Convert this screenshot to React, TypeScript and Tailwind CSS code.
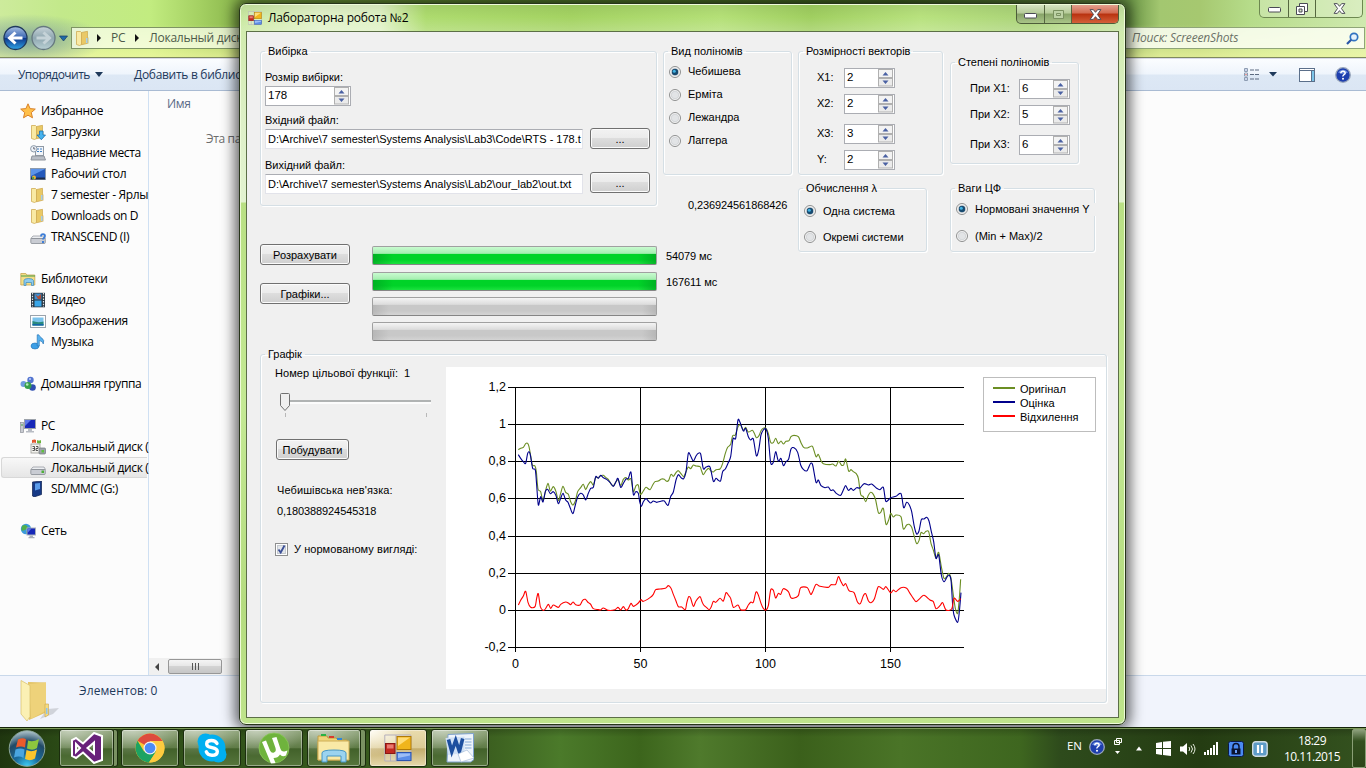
import React from "react";

type Pt = [number, number];

const parse = (s: string, dx = 0): Pt[] =>
  s.trim().split(/\s+/).map((p) => {
    const [x, y] = p.split(",").map(Number);
    return [x + dx, y] as Pt;
  });

const smooth = (pts: Pt[]) => {
  let d = `M${pts[0][0]},${pts[0][1]}`;
  for (let i = 0; i < pts.length - 1; i++) {
    const a = pts[Math.max(0, i - 1)];
    const b = pts[i];
    const c = pts[i + 1];
    const e = pts[Math.min(pts.length - 1, i + 2)];
    const f = (n: number) => n.toFixed(1);
    d += `C${f(b[0] + (c[0] - a[0]) / 7)},${f(b[1] + (c[1] - a[1]) / 7)} ${f(c[0] - (e[0] - b[0]) / 7)},${f(c[1] - (e[1] - b[1]) / 7)} ${c[0]},${c[1]}`;
  }
  return d;
};

const original = smooth([
  ...parse("115,254 122,250 130,247 137,236 143,235 147,245 152,272 157,300 165,303 169,320 174,372 182,380 189,408 196,380 204,355 211,378 220,365 228,380 235,407 242,385 249,364 257,382 265,388 272,410 279,420 286,408 293,380 302,368 310,358 317,374 324,360 332,350 340,360 347,338 355,338 362,332 370,331 378,338 385,343 393,357 400,363 408,350 415,345 422,362 430,343 438,338 445,345 453,342 460,380 468,362 475,361 481,388 490,378 498,367 510,374 518,360 525,350 535,348 545,342 553,343 560,349 566,346 573,328 580,334 588,323 595,317 603,326 611,335 618,320 625,306 632,311 640,300 648,303 660,305 665,318 670,329 678,317 686,310 693,318 700,321 708,314"),
  ...parse("0,312 8,295 16,265 23,247 32,238 38,212 46,210 54,185 62,180 70,196 77,187 85,201 97,196 103,205 109,218 117,212 123,197 130,190 138,190 145,205 152,232 160,233 167,220 175,236 183,228 190,237 198,229 207,227 213,215 222,211 235,215 243,233 251,247 262,249 270,245 278,245 288,275 295,268 303,287 310,296 330,299 338,297 348,303 356,288 364,300 371,300 377,282 386,318 393,314 400,320 408,325 415,340 422,388 430,395 437,410 445,391 452,382 460,388 467,405 475,443 482,442 490,430 498,478 506,465 512,445 520,456 528,450 543,455 550,492 560,480 567,478 575,487 583,515 590,536 597,527 603,503 611,506 618,499 626,500 633,535 640,555 648,580 656,562 664,605 672,640 680,635 686,625 693,640 700,690 706,730 713,745 718,700 722,643", 720),
]);

const estimate = smooth([
  ...parse("115,269 122,280 130,290 137,295 143,265 148,261 152,275 158,310 166,315 170,360 175,420 182,395 189,411 196,380 203,373 211,386 220,380 228,392 235,416 242,400 249,385 257,405 264,412 271,430 279,446 286,420 293,396 302,385 310,390 317,405 325,385 332,370 340,367 347,335 355,340 362,331 370,338 380,343 390,352 400,364 408,350 414,340 422,367 430,355 438,342 445,340 453,322 460,388 467,380 475,385 479,410 484,424 490,410 498,401 505,408 512,414 520,408 530,412 545,408 553,408 560,418 565,420 572,395 580,381 588,345 595,329 603,338 611,341 618,320 625,265 632,273 640,288 648,273 655,265 662,267 670,311 678,306 690,306 700,349 708,340 715,346"),
  ...parse("2,347 8,320 16,312 24,295 32,275 39,222 47,220 54,165 60,172 70,198 77,190 85,215 92,225 100,222 109,272 116,255 123,210 130,195 138,192 145,220 152,293 160,292 167,260 175,288 183,280 190,302 198,290 206,282 213,252 222,248 233,262 242,300 250,313 260,318 265,310 272,295 278,300 288,352 295,345 303,362 315,368 325,366 332,376 340,375 350,386 362,391 370,375 377,362 385,376 393,370 400,376 410,368 420,369 432,356 445,360 455,357 470,370 480,374 490,367 497,408 505,405 512,398 528,394 543,386 551,428 560,412 568,420 575,440 583,485 590,507 597,498 604,464 612,462 620,457 627,468 634,500 641,530 648,580 656,570 664,630 672,650 680,638 687,630 693,645 698,720 702,750 713,772 718,740 723,683", 720),
]);

const deviation = smooth([
  ...parse("115,720 122,706 130,693 137,679 144,712 152,727 165,725 170,700 175,686 181,725 189,736 196,732 205,718 212,730 220,720 235,727 242,718 257,711 265,714 272,719 279,711 287,719 300,720 308,706 316,703 325,713 332,718 340,731 355,734 362,735 370,729 385,736 405,734 414,727 422,735 430,725 438,735 445,731 453,715 460,724 475,714 483,704 490,709 510,698 520,688 527,674 540,672 556,670 565,662 573,670 580,688 588,708 595,725 605,726 616,734 620,715 626,695 632,700 640,724 648,708 660,695 666,710 671,720 680,728 688,734 694,725 700,709 707,712"),
  ...parse("0,700 10,708 18,683 25,690 32,700 40,727 54,720 62,734 77,734 85,720 93,711 100,712 108,681 115,690 123,715 130,730 138,735 145,722 152,675 160,676 167,699 175,685 182,688 190,671 205,680 212,697 220,700 235,692 242,668 262,668 272,688 278,680 288,658 300,664 325,667 333,659 347,658 355,635 362,648 370,662 377,656 387,677 402,683 412,710 421,716 430,692 437,686 445,707 453,713 463,702 475,665 490,673 498,665 512,684 520,675 528,680 543,668 560,670 570,685 580,700 588,710 600,700 612,691 630,705 640,710 648,731 660,722 668,713 678,735 695,732 702,700 713,709 722,701", 720),
]);

function Chart() {
  const ys = ["1,2", "1", "0,8", "0,6", "0,4", "0,2", "0", "-0,2"];
  const xs = ["0", "50", "100", "150"];
  const hy = [20, 57, 94, 131, 169, 206, 243, 280];
  const vx = [69, 194, 319, 444];
  const legend: [string, string][] = [["Оригінал", "#6b8e23"], ["Оцінка", "#00008b"], ["Відхилення", "#ff0000"]];
  return (
    <svg width="660" height="322" viewBox="0 0 660 322" className="block shrink-0 bg-white font-['Liberation_Sans',sans-serif]">
      <g stroke="#000" strokeWidth="1" shapeRendering="crispEdges">
        {hy.map((y) => <line key={y} x1="62" x2="518" y1={y + 0.5} y2={y + 0.5} />)}
        {vx.map((x) => <line key={x} x1={x + 0.5} x2={x + 0.5} y1="20" y2="285" />)}
      </g>
      <g fontSize="12.5" fill="#000">
        {ys.map((t, i) => <text key={t} x="60" y={hy[i] + 4} textAnchor="end">{t}</text>)}
        {xs.map((t, i) => <text key={t} x={vx[i] + 0.5} y="301" textAnchor="middle">{t}</text>)}
      </g>
      <g transform="translate(34 -2) scale(0.33333)" fill="none" strokeWidth="3.3" strokeLinejoin="round">
        <path d={original} stroke="#6b8e23" />
        <path d={estimate} stroke="#00008b" />
        <path d={deviation} stroke="#ff0000" />
      </g>
      <rect x="537.5" y="10.5" width="112" height="54" fill="#fff" stroke="#bdbdbd" />
      {legend.map(([t, c], i) => (
        <g key={t}>
          <rect x="547" y={20 + i * 14} width="22" height="2" fill={c} />
          <text x="574" y={26 + i * 14} fontSize="11">{t}</text>
        </g>
      ))}
    </svg>
  );
}

/* ---------- form controls ---------- */

function Group({ title, className, inner = "", children }: { title: string; className: string; inner?: string; children?: React.ReactNode }) {
  return (
    <fieldset className={`min-w-0 rounded-[3px] border border-[#d5dfe5] shadow-[inset_1px_1px_0_#fff,1px_1px_0_#fff] ${className}`}>
      <legend className="ml-[4px] h-[13px] px-[3px] leading-[13px]">{title}</legend>
      <div className={inner}>{children}</div>
    </fieldset>
  );
}

function Spin({ value, className }: { value: string; className: string }) {
  return (
    <div className={`flex h-[20px] shrink-0 border border-[#abadb3] bg-white ${className}`}>
      <span className="flex-1 pl-[2px] text-[11.500px] leading-[17px]">{value}</span>
      <svg width="15" height="18" viewBox="0 0 15 18" className="mr-px">
        <rect x="0.5" y="0.5" width="14" height="8" fill="#f3f3f3" stroke="#b0b0b0" />
        <rect x="0.5" y="9.5" width="14" height="7.5" fill="#ebebeb" stroke="#b0b0b0" />
        <path d="M4.500 6.500h6l-3-3.500zM4.500 11.500h6l-3 3.500z" fill="#4a61a3" />
      </svg>
    </div>
  );
}

function Radio({ on, label, className = "" }: { on?: boolean; label: string; className?: string }) {
  return (
    <div className={`flex items-center ${className}`}>
      <svg width="12" height="12" viewBox="0 0 12 12" className="mr-[7px] shrink-0">
        <circle cx="6" cy="6" r="5.500" fill="#f8f8f8" stroke="#8e8f8f" />
        <circle cx="6" cy="6" r="3.800" fill="#e2e4e6" stroke="#c9ccce" strokeWidth="0.7" />
        {on && <><circle cx="6" cy="6" r="3.200" fill="#174a70" /><circle cx="5.300" cy="5.200" r="1.500" fill="#43b4e4" /></>}
      </svg>
      <span className="relative whitespace-nowrap bg-[#f0f0f0] pr-[6px]">{label}</span>
    </div>
  );
}

function Btn({ children, className }: { children: React.ReactNode; className: string }) {
  return (
    <button className={`h-[21px] shrink-0 rounded-[3px] border border-[#707070] bg-[linear-gradient(#f2f2f2,#ebebeb_48%,#dddddd_50%,#cfcfcf)] pt-px text-center leading-[18px] whitespace-nowrap shadow-[inset_0_0_0_1px_#fbfbfb] ${className}`}>
      {children}
    </button>
  );
}

function Bar({ full, className = "" }: { full?: boolean; className?: string }) {
  return (
    <div className={`h-[19px] w-[285px] overflow-hidden rounded-[2px] border border-[#a0a0a0] border-b-[#858585] ${full ? "bg-[linear-gradient(#c9fbd0,#a5eeb0_38%,#00d328_40%,#00d328_75%,#1be23f)]" : "bg-[linear-gradient(#f4f4f4,#dcdcdc_38%,#c8c8c8_40%,#c8c8c8_75%,#d4d4d4)]"} ${className}`}>
      <div className={`mt-[7px] h-[10px] ${full ? "bg-[linear-gradient(90deg,#00a020aa,transparent_20px,transparent_265px,#00a020aa)]" : "bg-[linear-gradient(90deg,#a8a8a888,transparent_16px,transparent_269px,#a8a8a888)]"}`} />
    </div>
  );
}

function FormIcon({ size }: { size: number }) {
  return (
    <svg width={size} height={size} viewBox="0 0 28 28">
      <path d="M.8 1h26v26H.8zM.8 19h12M12 1v26M6.500 19v8" fill="#ffffff38" stroke="#b4afbb" />
      <rect x="1.500" y="9.500" width="9.500" height="10" fill="#c22a20" stroke="#8a1713" />
      <rect x="3" y="10.500" width="6.500" height="4" fill="#e87a70" />
      <rect x="13" y="2.500" width="14" height="13" fill="#f0b51c" stroke="#b07a06" />
      <path d="M14 3.500h12L14 12z" fill="#ffdc77" />
      <rect x="13" y="18.500" width="14" height="8" fill="#5b8de8" stroke="#2c54ae" />
      <path d="M14 19.500h12v2L14 24z" fill="#9dbdf5" />
    </svg>
  );
}

const caption = "flex items-center justify-center border-r border-[#55673f]";

function CloseGlyph() {
  return (
    <svg width="13" height="11" viewBox="0 0 12 10">
      <path d="M1 .5h3l2 2.500 2-2.500h3L7.800 5 11 9.500H8L6 7 4 9.500H1L4.200 5z" fill="#fff" stroke="#4a4a55" strokeWidth="0.9" />
    </svg>
  );
}
function MinGlyph() {
  return <svg width="13" height="6" viewBox="0 0 13 6" className="mt-[3px]"><rect x=".5" y=".5" width="12" height="4.500" rx="1" fill="#fff" stroke="#4a4a55" /></svg>;
}

function FormWindow() {
  return (
    <section className="absolute left-[239px] top-[3px] flex h-[722px] w-[887px] flex-col rounded-[7px] border border-[#27351a] bg-[linear-gradient(#cdeaa6,#def0c8_120px,#e3f3d1_198px,#b9e084_199px,#c4e994_400px,#b5dc80_600px,#bfe48c)] px-[7px] shadow-[inset_0_0_0_1px_#eefbd9,0_0_14px_4px_#000000a0]">
      <header className="-mx-[6px] mt-px flex h-[26px] shrink-0 rounded-t-[5px] bg-[linear-gradient(#00000010,transparent_12px,#ffffff30),linear-gradient(90deg,#c9e8a0,#e2f3c9_80px,#dff2c4_140px,#addb6e_185px,#a4d362_330px,#b4e077_480px,#a0cf60_570px,#b8e27e_680px,#aad378_790px,#c6e4a2)]">
        <div className="ml-[7px] mt-[6px]"><FormIcon size={14} /></div>
        <h1 className="ml-[6px] mt-[4px] font-['Open_Sans',sans-serif] text-[12px] leading-[18px] tracking-[-0.2px]">Лабораторна робота №2</h1>
        <div className="ml-auto mr-[5px] flex h-[19px] w-[103px] overflow-hidden rounded-b-[5px] border border-t-0 border-[#4d5d3a] bg-[linear-gradient(#d5e3c2,#b5cb98_45%,#87a368_50%,#a9c487)]">
          <div className={`w-[28px] ${caption}`}><MinGlyph /></div>
          <div className={`w-[27px] ${caption}`}><svg width="11" height="9" viewBox="0 0 11 9"><path d="M.5 .5h10v8H.5zM3.500 3.500h4v2h-4z" fill="#bdd2a5" stroke="#7a9160" /></svg></div>
          <div className="flex flex-1 items-center justify-center bg-[linear-gradient(#e3a08e,#d26a50_45%,#b8310f_50%,#d4603a)]"><CloseGlyph /></div>
        </div>
      </header>
      <main className="mb-[6px] -mx-px flex-1 border border-[#5c6f47] bg-[#f0f0f0] pl-[13px] pt-[13px] font-['Liberation_Sans',sans-serif] text-[11px] leading-[13px] text-black">
        <div className="flex h-[296px] items-start">
          <div className="w-[397px]">
            <Group title="Вибірка" className="h-[161px]" inner="pl-[4px]">
              <div className="mt-[13px]">Розмір вибірки:</div>
              <Spin value="178" className="mt-[2px] w-[86px]" />
              <div className="mt-[8px]">Вхідний файл:</div>
              <div className="mt-px flex">
                <div className="mt-px h-[20px] w-[318px] overflow-hidden border border-[#e2e3ea] border-t-[#abadb3] bg-white pl-[2px] leading-[18px] whitespace-nowrap">D:\Archive\7 semester\Systems Analysis\Lab3\Code\RTS - 178.t</div>
                <Btn className="ml-[7px] w-[60px]">...</Btn>
              </div>
              <div className="mt-[10px]">Вихідний файл:</div>
              <div className="flex">
                <div className="mt-[2px] h-[20px] w-[318px] overflow-hidden border border-[#e2e3ea] border-t-[#abadb3] bg-white pl-[2px] leading-[18px] whitespace-nowrap">D:\Archive\7 semester\Systems Analysis\Lab2\our_lab2\out.txt</div>
                <Btn className="ml-[7px] w-[60px]">...</Btn>
              </div>
            </Group>
            <div className="mt-[38px] flex">
              <div className="flex w-[90px] flex-col gap-[18px]">
                <Btn className="w-[90px]">Розрахувати</Btn>
                <Btn className="w-[90px]">Графіки...</Btn>
              </div>
              <div className="ml-[22px] pt-[2px]">
                <Bar full />
                <Bar full className="mt-[7px]" />
                <Bar className="mt-[6px]" />
                <Bar className="mt-[6px]" />
              </div>
            </div>
          </div>
          <div className="ml-[6px] w-[129px]">
            <Group title="Вид поліномів" className="h-[130px]" inner="pl-[5px] pt-[2px]">
              <Radio on label="Чебишева" className="h-[23px]" />
              <Radio label="Ерміта" className="h-[23px]" />
              <Radio label="Лежандра" className="h-[23px]" />
              <Radio label="Лаггера" className="h-[23px]" />
            </Group>
            <div className="ml-[25px] mt-[24px] tracking-[-0.1px]">0,236924561868426</div>
            <div className="ml-[3px] mt-[38px] tracking-[-0.1px]">54079 мс</div>
            <div className="ml-[3px] mt-[13px] tracking-[-0.1px]">167611 мс</div>
          </div>
          <div className="ml-[6px] w-[145px]">
            <Group title="Розмірності векторів" className="h-[130px]" inner="pl-[18px]">
              <div className="mt-[10px] flex"><span className="w-[27px] leading-[19px]">X1:</span><Spin value="2" className="w-[51px]" /></div>
              <div className="mt-[6px] flex"><span className="w-[27px] leading-[19px]">X2:</span><Spin value="2" className="w-[51px]" /></div>
              <div className="mt-[10px] flex"><span className="w-[27px] leading-[19px]">X3:</span><Spin value="3" className="w-[51px]" /></div>
              <div className="mt-[6px] flex"><span className="w-[27px] leading-[19px]">Y:</span><Spin value="2" className="w-[51px]" /></div>
            </Group>
            <Group title="Обчислення λ" className="mt-[7px] h-[70px] w-[129px]" inner="pl-[5px] pt-[3px]">
              <Radio on label="Одна система" className="h-[26px]" />
              <Radio label="Окремі системи" className="h-[26px]" />
            </Group>
          </div>
          <div className="ml-[7px] pt-[11px]">
            <Group title="Степені поліномів" className="h-[108px] w-[129px]" inner="pl-[19px]">
              <div className="mt-[10px] flex"><span className="w-[49px] leading-[19px]">При X1:</span><Spin value="6" className="w-[51px]" /></div>
              <div className="mt-[6px] flex"><span className="w-[49px] leading-[19px]">При X2:</span><Spin value="5" className="w-[51px]" /></div>
              <div className="mt-[10px] flex"><span className="w-[49px] leading-[19px]">При X3:</span><Spin value="6" className="w-[51px]" /></div>
            </Group>
            <Group title="Ваги ЦФ" className="mt-[18px] h-[70px] w-[145px]" inner="pl-[5px]">
              <Radio on label="Нормовані значення Y" className="h-[28px]" />
              <Radio label="(Min + Max)/2" className="h-[26px]" />
            </Group>
          </div>
        </div>
        <Group title="Графік" className="mt-[7px] h-[355px] w-[847px]">
          <div className="flex">
            <div className="w-[185px] shrink-0 pl-[14px] pt-[6px]">
              <div className="flex"><span className="w-[129px] tracking-[0.050px]">Номер цільової функції:</span><span>1</span></div>
              <svg width="160" height="28" viewBox="0 0 160 28" className="mt-[12px] block">
                <rect x="14" y="8" width="142" height="2" fill="#b0b3b3" />
                <rect x="14" y="10" width="142" height="2" fill="#fcfcfc" />
                <path d="M5.500 2.500q0-1 1-1h7q1 0 1 1v11l-4.500 5-4.500-5z" fill="#efefef" stroke="#707070" />
                <path d="M10.500 21v4M151.500 21v4" stroke="#b8b8b8" />
              </svg>
              <Btn className="ml-px mt-[19px] w-[73px]">Побудувати</Btn>
              <div className="ml-[2px] mt-[24px] tracking-[0.100px]">Чебишівська нев'язка:</div>
              <div className="ml-[2px] mt-[8px] tracking-[-0.1px]">0,180388924545318</div>
              <div className="mt-[25px] flex items-center">
                <svg width="13" height="13" viewBox="0 0 13 13"><rect x=".5" y=".5" width="12" height="12" fill="#fff" stroke="#8e8f8f" /><rect x="2.500" y="2.500" width="8" height="8" fill="#e3e6ea" stroke="#c5cad0" /><path d="M3.500 6.500l2.200 3L9.500 2.500" fill="none" stroke="#3b4f96" strokeWidth="1.800" /></svg>
                <span className="ml-[6px] tracking-[0.050px]">У нормованому вигляді:</span>
              </div>
            </div>
            <div className="relative mt-[6px]"><Chart /></div>
          </div>
        </Group>
      </main>
    </section>
  );
}

/* ---------- explorer ---------- */

function Ico({ kind }: { kind: string }) {
  const folder = <><path d="M1.500 1.500h4l1 1v12l-2 1-3-1z" fill="#f9eaa4" stroke="#cfac55" strokeWidth="0.8" /><path d="M6.500 2.500l6-1.200v12l-6 1.500z" fill="#e9c966" stroke="#cfac55" strokeWidth="0.8" /><rect x="11" y="8" width="2" height="5" fill="#a8cfea" /><path d="M13 7.500v6" stroke="#cfac55" strokeWidth="0.8" /></>;
  return (
    <svg width="16" height="16" viewBox="0 0 16 16" className="shrink-0">
      {kind === "star" && <path d="M8 .8l2.100 4.800 5.200.5-4 3.500 1.200 5.200L8 12.200l-4.500 2.600 1.200-5.200-4-3.500 5.200-.5z" fill="#ffc04a" stroke="#d9822b" />}
      {kind === "folder" && folder}
      {kind === "down" && <>{folder}<path d="M9.500 7h3.500v4h2.500l-4.200 4.700L7 11h2.500z" fill="#46b3ee" stroke="#1b6fae" strokeWidth="0.8" /></>}
      {kind === "recent" && <><rect x="5.500" y="1.500" width="8" height="9" fill="#f2f5f9" stroke="#8f99a5" /><path d="M7 4h2M10 4h2M7 6.500h2M10 6.500h2" stroke="#3e7fc4" /><path d="M2 11h12l1.500 4H1z" fill="#b9bec6" stroke="#8d939b" /><circle cx="3.800" cy="3.800" r="3.200" fill="#eef3f8" stroke="#8c99a8" /><path d="M3.800 2v2h1.500" stroke="#445" fill="none" strokeWidth="0.8" /></>}
      {kind === "desktop" && <><rect x=".5" y="2.500" width="15" height="11" fill="#2358bb" stroke="#8c9aac" /><path d="M1 3h14L1 10z" fill="#5c93e8" /><path d="M1 12.500h14" stroke="#1a2b4a" strokeWidth="2" /><circle cx="4" cy="11.500" r="2" fill="#f0b030" /><circle cx="3.200" cy="12" r="1" fill="#36a443" /></>}
      {(kind === "usb" || kind === "drive") && <><path d="M3 7h11l1.500 2.500H.8z" fill="#eceef1" stroke="#999da4" strokeWidth="0.8" /><rect x=".8" y="9.500" width="14.500" height="5" rx="1" fill="#c9ccd3" stroke="#878b93" strokeWidth="0.8" />{kind === "drive" && <rect x="11.500" y="10.500" width="2.500" height="2.500" fill="#4fae3a" />}{kind === "usb" && <><path d="M11 7.500q0-2.300 2-2.300t2 1.800q0 1-1 1.800t-1 1.700" fill="none" stroke="#3f7fd8" strokeWidth="1.800" /><rect x="12" y="12" width="2" height="2" fill="#3f7fd8" /></>}</>}
      {kind === "lib" && <><path d="M.8 2.500h5l1 1.500h8v10H.8z" fill="#f3dd86" stroke="#c6a550" strokeWidth="0.8" /><path d="M1 5h14" stroke="#4aa04a" /><path d="M4 14.500V9.500q0-2 4.500-2t5 2v5h-2v-3H6v3z" fill="#8ccbf0" stroke="#3b8abf" strokeWidth="0.7" /></>}
      {kind === "video" && <><rect x="1" y=".8" width="14" height="14.500" fill="#2b3742" /><path d="M2.500 1v14M13.500 1v14" stroke="#dfe7ee" strokeWidth="1.200" strokeDasharray="1.500 1.200" /><rect x="4.500" y="1.500" width="7" height="6" fill="#3e8fd0" /><rect x="4.500" y="8.500" width="7" height="6" fill="#3aa6e8" /><path d="M5 2l3 2.500L11 2v5H8z" fill="#b0503a" /></>}
      {kind === "image" && <><rect x=".5" y="2.500" width="15" height="12" fill="#fff" stroke="#9aa3ac" /><rect x="2.500" y="4.500" width="11" height="8" fill="#7cc3ec" /><path d="M2.500 8q5 2 11 .5v4h-11z" fill="#2a8a7c" /><path d="M2.500 11h11v1.500h-11z" fill="#1565a8" /></>}
      {kind === "music" && <><ellipse cx="5" cy="12" rx="4" ry="3" fill="#3d9fe6" stroke="#1c6bb0" strokeWidth="0.6" /><path d="M7.200 12V.8h1.600q1 2.200 3 3.200 3 2 1.500 6-.5-2.800-4-3.500V12z" fill="#58b1ee" stroke="#1c6bb0" strokeWidth="0.6" /></>}
      {kind === "home" && <><circle cx="10.500" cy="4" r="3.200" fill="#5274d0" /><circle cx="3.500" cy="8" r="3" fill="#6f9be0" /><circle cx="12.500" cy="11.500" r="3.300" fill="#2f4fb0" /><circle cx="8" cy="9.500" r="3.500" fill="#37a04a" /><circle cx="7.200" cy="8.500" r="1.300" fill="#b9eac0" /><circle cx="10" cy="3" r="1" fill="#c3d2f8" /></>}
      {kind === "pc" && <><rect x="4.500" y="1.500" width="11" height="9" fill="#1728b8" stroke="#9ca2ab" /><path d="M5 2h6L5 8z" fill="#5d78ea" /><path d="M8 11h4v2h2v1.500H6V13h2z" fill="#b8bcc4" /><rect x=".5" y="4.500" width="3" height="10" fill="#c9ccd2" stroke="#8d929a" strokeWidth="0.7" /><path d="M1 7h2" stroke="#47a447" /></>}
      {kind === "win" && <><path d="M2 1q3-1 4 0v3Q4 3 2 4z" fill="#e2572e" /><path d="M7 1q2 1 4 0v3Q9 5 7 4z" fill="#69b33c" /><rect x="1" y="5" width="9" height="9" fill="#f3f3ee" stroke="#9a9a94" strokeWidth="0.8" /><path d="M2.500 7.500h2v4h-2M2.500 9.500h2M6 7.500h2v2H6v2h2" stroke="#333" fill="none" strokeWidth="0.8" /><rect x="9" y="9" width="6.500" height="6" rx="1" fill="#9da3aa" stroke="#70757c" strokeWidth="0.7" /><rect x="11.500" y="11" width="2.500" height="2.500" fill="#5fc03f" /></>}
      {kind === "sd" && <><path d="M2.500 1l9-1v13.500L4 16l-1.500-1z" fill="#173a86" stroke="#0d2050" strokeWidth="0.7" /><path d="M5 2.500l5-.6v6l-5 1.600z" fill="#5a9bea" /></>}
      {kind === "net" && <><circle cx="6" cy="6" r="5.200" fill="#3b9bdc" /><path d="M2 3q3-2 5 0T5 7 1.500 6zM6 8l3 1-2 2.200z" fill="#51b04c" /><rect x="7" y="5" width="8.500" height="7" fill="#1728b8" stroke="#a9b0ba" /><path d="M7.500 5.500h4L7.500 10z" fill="#5d78ea" /><path d="M9.500 12.500h3.500v1.500h1.500v1.200h-6V14h1z" fill="#a9afb9" /></>}
    </svg>
  );
}

const nav: ([string, string, number] | null)[] = [
  ["star", "Избранное", 0], ["down", "Загрузки", 1], ["recent", "Недавние места", 1], ["desktop", "Рабочий стол", 1],
  ["folder", "7 semester - Ярлы", 1], ["folder", "Downloads on D", 1], ["usb", "TRANSCEND (I)", 1], null,
  ["lib", "Библиотеки", 0], ["video", "Видео", 1], ["image", "Изображения", 1], ["music", "Музыка", 1], null,
  ["home", "Домашняя группа", 0], null,
  ["pc", "PC", 0], ["win", "Локальный диск (", 1], ["drive", "Локальный диск (", 2], ["sd", "SD/MMC (G:)", 1], null,
  ["net", "Сеть", 0],
];

function Help() {
  return (
    <svg width="16" height="16" viewBox="0 0 16 16">
      <circle cx="8" cy="8" r="7.300" fill="#1e3fae" stroke="#9aa7bb" strokeWidth="1.300" />
      <path d="M3 5.500a5.500 4.500 0 0 1 10 0q-5 2.500-10 0z" fill="#6c8de0" />
      <path d="M5.800 6.200q.2-2 2.200-2t2.200 1.800q0 1-1.200 1.700T8 9.500" fill="none" stroke="#fff" strokeWidth="1.500" />
      <circle cx="8" cy="11.700" r="1" fill="#fff" />
    </svg>
  );
}

function Explorer() {
  return (
    <div className="flex h-[728px] flex-col overflow-hidden bg-[#fcfcfc] font-['Open_Sans',sans-serif] text-[12px] tracking-[-0.35px]">
      <div className="flex h-[58px] shrink-0 flex-col border-b border-[#7f8a5e] bg-[radial-gradient(80px_26px_at_26px_40px,#7fa39a,transparent),linear-gradient(transparent_24px,#f6faa4b0_56px),linear-gradient(90deg,#cdeb9c,#c3e98b_60px,#c2ec80_150px,#a4d062_200px,#7aa73f_260px,#5c8630_500px,#466b24_900px,#6d9848_1130px,#a3c770_1160px,#a6c870_1200px,#b6dc8a_1250px,#cfe9af)]">
        <div className="flex h-[27px] justify-end">
          <div className="mr-[3px] flex h-[18px] w-[104px] overflow-hidden rounded-b-[5px] border border-t-0 border-[#6d8850] bg-[#ffffff38]">
            <div className={`w-[29px] ${caption}`}><MinGlyph /></div>
            <div className={`w-[27px] ${caption}`}><svg width="12" height="12" viewBox="0 0 12 12"><path d="M3.500 .5h8v8h-8z" fill="#fff" stroke="#4a4a55" /><path d="M.5 3.500h8v8h-8z" fill="#fff" stroke="#4a4a55" /><path d="M3 6h3v3H3z" fill="#d5e5c5" stroke="#4a4a55" /></svg></div>
            <div className="flex flex-1 items-center justify-center"><CloseGlyph /></div>
          </div>
        </div>
        <div className="flex h-[23px]">
          <svg width="71" height="30" viewBox="0 0 71 30" className="-mt-[4px] shrink-0">
            <defs>
              <linearGradient id="bk" x2="0" y2="1"><stop offset="0" stopColor="#a9c0e2" /><stop offset=".48" stopColor="#3c68b4" /><stop offset=".52" stopColor="#0f3a8e" /><stop offset="1" stopColor="#2fa4e6" /></linearGradient>
              <linearGradient id="fw" x2="0" y2="1"><stop offset="0" stopColor="#c8d4da" /><stop offset=".5" stopColor="#8fa7b0" /><stop offset="1" stopColor="#b9d0d4" /></linearGradient>
            </defs>
            <circle cx="15.500" cy="15" r="11.500" fill="url(#bk)" stroke="#20395c" strokeWidth="1.300" />
            <path d="M22.500 15H10M15.500 9.500L9.500 15l6 5.500" fill="none" stroke="#fff" strokeWidth="3" />
            <circle cx="43.500" cy="15" r="11.500" fill="url(#fw)" stroke="#66787f" strokeWidth="1.300" />
            <path d="M36.500 15H49M43.500 9.500l6 5.500-6 5.500" fill="none" stroke="#c5d3d8" strokeWidth="3" />
            <path d="M59.500 13h8l-4 5z" fill="#1f6aa8" stroke="#153a66" strokeWidth="0.7" />
          </svg>
          <div className="flex h-[22px] w-[300px] items-center border border-[#7e9463] bg-[#fbfff0b8] pl-[3px] tracking-[-0.250px] text-[#4d5a4a]">
            <Ico kind="folder" />
            <svg width="6" height="8" viewBox="0 0 6 8" className="ml-[5px]"><path d="M1 0l4 4-4 4z" fill="#111" /></svg>
            <span className="ml-[9px]">PC</span>
            <svg width="6" height="8" viewBox="0 0 6 8" className="ml-[9px]"><path d="M1 0l4 4-4 4z" fill="#111" /></svg>
            <span className="ml-[9px]">Локальный диск</span>
          </div>
          <div className="ml-auto mr-px flex h-[22px] w-[260px] items-center border border-[#8fa578] bg-[#fdfff5d8] pl-[26px] tracking-[-0.150px] text-[#6b7167] italic">
            <span>Поиск: ScreeenShots</span>
            <svg width="13" height="13" viewBox="0 0 13 13" className="ml-auto mr-[5px]"><circle cx="8" cy="5" r="3.700" fill="#e6f2fb" stroke="#3273c0" strokeWidth="1.700" /><path d="M5.200 7.800L1 12" stroke="#2a56a8" strokeWidth="2.200" /></svg>
          </div>
        </div>
      </div>
      <div className="flex h-[33px] shrink-0 items-center border-b border-[#a9bbd3] border-t border-t-[#d9d9ea] bg-[linear-gradient(#fbfdff,#eff5fc_47%,#dde8f5_53%,#dbe6f4)] pl-[18px] text-[#1e395b]">
        <span className="w-[72px] tracking-[-0.550px]">Упорядочить</span>
        <svg width="8" height="5" viewBox="0 0 8 5" className="ml-[5px]"><path d="M0 0h8L4 5z" fill="#1e395b" /></svg>
        <span className="ml-[31px] whitespace-nowrap tracking-[-0.300px]">Добавить в библио</span>
        <svg width="16" height="14" viewBox="0 0 16 14" className="ml-auto"><path d="M.5 .5h3v3h-3zM.5 5h3v3h-3zM.5 9.500h3v3h-3z" fill="#fff" stroke="#8d9cb2" /><path d="M1.500 6.500h1" stroke="#c33" /><path d="M1.500 2h1M1.500 11h1" stroke="#35a" /><path d="M6 2h4M11 2h4M6 6.500h4M11 6.500h4M6 11h4M11 11h4" stroke="#5d6b80" /></svg>
        <svg width="8" height="5" viewBox="0 0 8 5" className="ml-[9px]"><path d="M0 0h8L4 4.500z" fill="#1e395b" /></svg>
        <svg width="16" height="14" viewBox="0 0 16 14" className="ml-[22px]"><rect x=".5" y=".5" width="15" height="13" fill="#fff" stroke="#5b6f8a" /><path d="M0 2.500h16M12.500 3v11" stroke="#5b6f8a" /><rect x="13" y="3" width="2" height="10" fill="#7cc4e8" /></svg>
        <div className="ml-[20px] mr-[15px]"><Help /></div>
      </div>
      <div className="flex min-h-0 flex-1">
        <nav className="w-[149px] shrink-0 border-r border-[#cfe0f3] pt-[9px]">
          {nav.map((n, i) =>
            n ? (
              <div key={i} className={`flex h-[21px] items-center whitespace-nowrap ${n[2] === 0 ? "pl-[20px]" : n[2] === 1 ? "pl-[30px]" : "ml-px mr-px rounded-l-[3px] border border-r-0 border-[#d8d8d8] bg-[linear-gradient(#f8f8f8,#e6e6e6)] pl-[28px]"}`}>
                <Ico kind={n[0]} />
                <span className="ml-[5px]">{n[1]}</span>
              </div>
            ) : <div key={i} className="h-[21px]" />
          )}
        </nav>
        <div className="flex flex-1 flex-col text-[#6d6d6d]">
          <div className="mt-[4px] pl-[18px] text-[#5a6a86]">Имя</div>
          <div className="mt-[17px] pl-[57px]">Эта папк</div>
          <div className="mt-auto flex h-[17px] w-[700px] items-center bg-[#f0f0f0] pl-[5px]">
            <svg width="6" height="8" viewBox="0 0 6 8"><path d="M5 0v8L1 4z" fill="#444" /></svg>
            <div className="ml-[8px] flex h-[15px] w-[54px] items-center justify-center gap-[2px] rounded-[2px] border border-[#979797] bg-[linear-gradient(#f5f5f5,#e6e6e6_48%,#d3d3d3_50%,#c6c6c6)]">
              <i className="h-[7px] w-px bg-[#555]" /><i className="h-[7px] w-px bg-[#555]" /><i className="h-[7px] w-px bg-[#555]" />
            </div>
          </div>
        </div>
      </div>
      <footer className="flex h-[53px] shrink-0 border-t border-[#c9d8ea] bg-[#f1f4fc] text-[#1e395b]">
        <svg width="42" height="46" viewBox="0 0 42 46" className="ml-[19px] mt-[3px]">
          <path d="M28 30l12-1-6 6-13 5z" fill="#00000022" />
          <path d="M9 3l18 .5v30L10 41z" fill="#e3c468" />
          <path d="M10 5l17-1.500v28L12 40z" fill="#eed27a" />
          <path d="M2 1.500l9 5v31l-3 4.500-6-7z" fill="#fbf0b4" stroke="#d9bf68" strokeWidth="0.7" />
          <path d="M26 25h3.500v11l-3.500 2z" fill="#f4dc82" stroke="#c9a44a" strokeWidth="0.6" /><rect x="27" y="29" width="1.500" height="6" fill="#8dc3ec" />
        </svg>
        <span className="ml-[18px] mt-[6px] tracking-[0.100px]">Элементов: 0</span>
      </footer>
    </div>
  );
}

/* ---------- taskbar ---------- */

const tb = "flex h-[38px] items-center justify-center rounded-[3px] border border-[#1b2d0e] shadow-[inset_0_0_0_1px_#ffffff66]";
const tbGlass = "bg-[radial-gradient(50px_26px_at_10px_0,#ffffff80,transparent),linear-gradient(#8da278,#5f7b46_50%,#42612a_52%,#56763c)]";

function Taskbar() {
  return (
    <footer className="flex h-[40px] items-start overflow-hidden border-t border-[#7d9a5a] bg-[linear-gradient(#00000030,transparent_8px,transparent),linear-gradient(90deg,#1f360f,#2b4a16_60px,#3c6020_490px,#4b7a2a_560px,#3c651c_640px,#4f7a2c_700px,#3b601b_800px,#4a7427_900px,#3e661f_1020px,#2e4b1c_1060px,#243c12_1200px,#34521f_1366px)] font-['Open_Sans',sans-serif] text-[12px] text-white shadow-[0_-1px_0_#142408]">
      <svg width="59" height="39" viewBox="0 0 59 39" className="shrink-0">
        <defs><radialGradient id="orb" cx=".5" cy="1" r="1"><stop offset="0" stopColor="#3fd0f8" /><stop offset=".35" stopColor="#1a6b9c" /><stop offset=".7" stopColor="#214a66" /><stop offset="1" stopColor="#b3c8cf" /></radialGradient></defs>
        <circle cx="27" cy="19.500" r="17.800" fill="url(#orb)" stroke="#8ba69a" />
        <path d="M18 10.500q5-2.500 8 0l-1 8q-4-2-9 0z" fill="#ea5b2c" />
        <path d="M28 11.500q5 2 11-1.500l-2 9q-4 3-10 .5z" fill="#8cc63e" />
        <path d="M15.500 20.500q5-2 9 0l-1 8.500q-4-2.500-9.500-.5z" fill="#4aa5e0" />
        <path d="M26.500 21q5 2.500 10.500-.5l-2 9q-5 3-10 .5z" fill="#fbc52c" />
      </svg>
      <div className={`w-[55px] ${tb} ${tbGlass}`}>
        <svg width="32" height="32" viewBox="0 0 32 32"><path d="M23 1l8 3v24l-8 3L12 20.500 5 26l-4-2V8l4-2 7 5.500zM23 10.500L16.500 16l6.500 5.500zM5 12v8l4-4z" fill="#68217a" stroke="#fff" strokeWidth="2" fillRule="evenodd" /></svg>
      </div>
      <div className="mr-[3px] h-[38px] w-[4px] rounded-r-[3px] border border-l-0 border-[#1b2d0e] bg-[#7a9262]" />
      <div className={`mr-[4px] w-[58px] ${tb} ${tbGlass}`}>
        <svg width="30" height="30" viewBox="0 0 30 30"><circle cx="15" cy="15" r="14.500" fill="#fcc934" /><path d="M15 15L2.500 7.700A14.500 14.500 0 0 1 27.600 8H15z" fill="#dd4b3e" /><path d="M2.500 7.700A14.500 14.500 0 0 0 14 29.500L21 18.500 9 18.500z" fill="#1da362" /><path d="M14 29.500L21.500 18 15 8h12.600A14.500 14.500 0 0 1 14 29.500z" fill="#fdcb3f" /><circle cx="15" cy="15" r="6.500" fill="#f1f1f1" /><circle cx="15" cy="15" r="5.300" fill="#4c8bf5" /></svg>
      </div>
      <div className={`mr-[4px] w-[58px] ${tb} ${tbGlass}`}>
        <svg width="30" height="30" viewBox="0 0 30 30"><circle cx="15" cy="15" r="13.500" fill="#00aff0" /><circle cx="8.500" cy="8.500" r="8" fill="#00aff0" /><circle cx="21.500" cy="21.500" r="8" fill="#00aff0" /><path d="M20 10.500Q18.500 7.500 14.500 7.500q-4.800 0-4.800 3.400 0 2.700 5.300 3.700t5.300 3.900q0 3.800-5.300 3.800-4.500 0-5.700-3.500" fill="none" stroke="#fff" strokeWidth="3.400" strokeLinecap="round" /></svg>
      </div>
      <div className={`mr-[4px] w-[58px] ${tb} ${tbGlass}`}>
        <svg width="32" height="32" viewBox="0 0 32 32"><circle cx="16" cy="16" r="15" fill="#6fb33d" stroke="#8bc95a" strokeWidth="0.8" /><path d="M4 10l4-1.500 4 10q1.500 3 4 2t1.500-4.500l-3.500-10 4.500-1 4 12q1 3 4 2.500l3-1-1.500 5q-4 2-6-1-2 3.500-6.500 3.500l2 5-4.500.5z" fill="#fff" /></svg>
      </div>
      <div className={`w-[54px] ${tb} ${tbGlass}`}>
        <svg width="34" height="32" viewBox="0 0 34 32"><path d="M1 4h9l1 2h8l2 2h9v20H1z" fill="#eed47a" stroke="#bf9c42" /><path d="M1 9h31v19H1z" fill="#f9e9a6" stroke="#cfae56" /><path d="M4 3h5" stroke="#28b345" strokeWidth="2" /><path d="M12 5h5" stroke="#d93b2c" strokeWidth="2" /><path d="M20 7h5" stroke="#2f86d8" strokeWidth="2" /><path d="M5 30V21q0-3 12-3t12 3v9h-5v-6H10v6z" fill="#9bd3ef" stroke="#4796c4" /></svg>
      </div>
      <div className="mr-[3px] h-[38px] w-[5px] rounded-r-[3px] border border-l-0 border-[#1b2d0e] bg-[#7a9262]" />
      <div className={`mr-[4px] w-[58px] bg-[radial-gradient(40px_26px_at_0_0,#fffdf5,transparent),linear-gradient(#e9dcae,#dccb95_50%,#c3ac6a_52%,#e6d9ac)] ${tb}`}><FormIcon size={28} /></div>
      <div className={`w-[58px] ${tb} ${tbGlass}`}>
        <svg width="30" height="30" viewBox="0 0 30 30"><path d="M3 1.500L28.500.5V27l-3 2H2z" fill="#eef4fb" stroke="#7ea2cf" /><path d="M20 6h6.500M20 9h6.500M20 12h6.500M20 15h6.500" stroke="#86abd8" /><path d="M.5 5l19-1.500V20L3 22z" fill="#cfe0f5" /><path d="M3.500 6.500l3.300 12 3.900-11 3.700 11 3.300-13" fill="none" stroke="#1d4f9f" strokeWidth="3.600" /><path d="M13 21l9-4 7 8-13 4z" fill="#fff" stroke="#a8bdd8" strokeWidth="0.7" /></svg>
      </div>
      <div className="ml-auto flex h-[39px] items-center">
        <span className="mb-[5px] w-[22px] text-[11.500px] tracking-[-0.2px]">EN</span>
        <div className="mb-[4px] mr-[8px]"><Help /></div>
        <svg width="10" height="20" viewBox="0 0 10 20" className="mb-[4px] mr-[12px]"><path d="M3.500 1.500h5v4h-5zM1.500 3.500h5v4h-5z" fill="#3a5520" stroke="#fff" /><path d="M2 14h5l-2.500 3z" fill="#fff" /></svg>
        <svg width="8" height="5" viewBox="0 0 8 5" className="mr-[13px]"><path d="M1 4.500h6L4 .5z" fill="#fff" /></svg>
        <svg width="15" height="15" viewBox="0 0 15 15" className="mr-[9px]"><path d="M0 2l6-1v6H0zM7 .8L15 0v7H7zM0 8h6v6l-6-1zM7 8h8v7l-8-1z" fill="#fff" /></svg>
        <svg width="16" height="14" viewBox="0 0 16 14" className="mr-[8px]"><path d="M0 4.500h3L7 1v12L3 9.500H0z" fill="#fff" /><path d="M9 5q1.500 2 0 4M11 3.500q3 3.500 0 7M13 2q4 5 0 10" fill="none" stroke="#e8efe0" /></svg>
        <svg width="15" height="13" viewBox="0 0 15 13" className="mr-[9px]"><path d="M0 10h2v3H0zM3 8h2v5H3zM6 6h2v7H6zM9 3h2v10H9zM12 0h2v13h-2z" fill="#fff" /></svg>
        <svg width="16" height="16" viewBox="0 0 16 16" className="mr-[8px]"><rect x=".5" y=".5" width="15" height="15" rx="2" fill="#4a8af2" stroke="#0b1a48" /><path d="M5 8V5.500a3 3 0 0 1 6 0V8" fill="none" stroke="#0a1330" strokeWidth="1.500" /><rect x="3.500" y="7.500" width="9" height="6" fill="#0a1330" /><rect x="7" y="9" width="2" height="3" fill="#6ba0f8" /></svg>
        <svg width="16" height="16" viewBox="0 0 16 16"><rect x=".7" y=".7" width="14.500" height="14.500" rx="3" fill="#5e9cc8" stroke="#cfdbe2" strokeWidth="1.400" /><path d="M6 4v8M10 4v8" stroke="#fff" strokeWidth="2.200" /></svg>
        <div className="w-[84px] pl-[4px] text-center text-[12px] leading-[16px] tracking-[-0.500px]"><div>18:29</div><div>10.11.2015</div></div>
        <div className="ml-0 h-[39px] w-[14px] rounded-[2px] border border-[#8a9f76] bg-[linear-gradient(#8c9f7b,#33501f_30%,#2c4518)]" />
      </div>
    </footer>
  );
}

export default function App() {
  return (
    <div className="relative h-[768px] w-[1366px] overflow-hidden bg-[#3c6020]">
      <Explorer />
      <FormWindow />
      <div className="relative"><Taskbar /></div>
    </div>
  );
}
